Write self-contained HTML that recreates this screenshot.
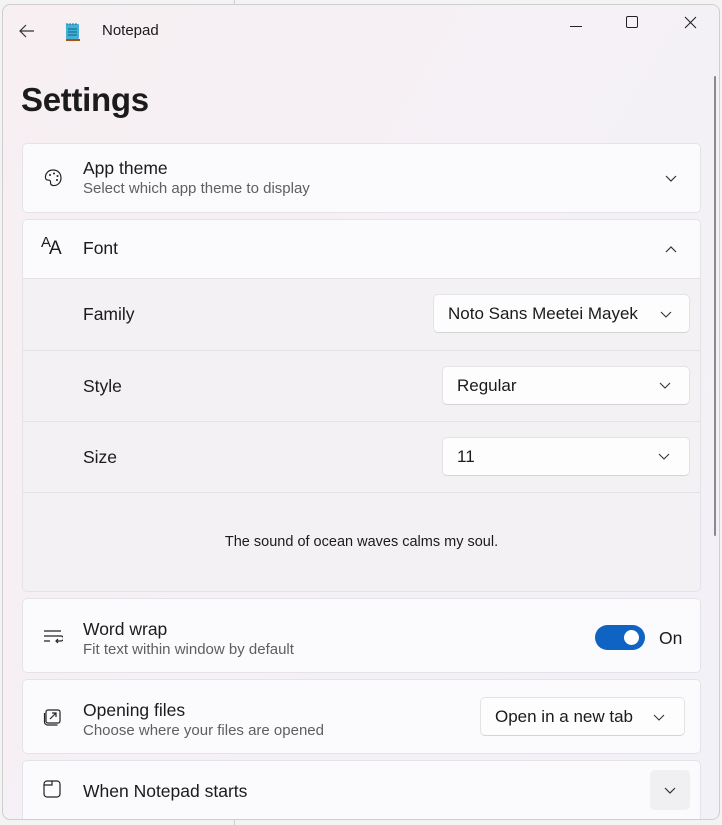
<!DOCTYPE html>
<html><head><style>
*{box-sizing:border-box;margin:0;padding:0}
body{width:722px;height:825px;background:#f3f3f3;position:relative;overflow:hidden;font-family:"Segoe UI","Liberation Sans",sans-serif;color:#1b1b1b}
.vl{position:absolute;left:234px;width:1px;background:#d0d0d0}
.win{position:absolute;left:2px;top:4px;width:718px;height:816px;border:1px solid #cfcfcf;border-radius:8px;background:linear-gradient(120deg,#f7eff2 0%,#f5f1f6 50%,#f2f1f7 100%);overflow:hidden}
.abs{position:absolute}
.card{position:absolute;left:19px;width:679px;background:#fbfafc;border:1px solid #e6e3e8;border-radius:5px}
.t{position:absolute;font-size:17.5px;color:#1b1b1b;white-space:nowrap}
.s{position:absolute;font-size:15px;color:#5f5f5f;white-space:nowrap}
.dd{position:absolute;background:#fdfdfe;border:1px solid #e3e2e6;border-bottom-color:#d4d3d8;border-radius:5px;font-size:17px;padding-left:14px;white-space:nowrap}
.row{position:absolute;left:0;width:677px;background:#f4f1f4;border-top:1px solid #e5e2e6}
</style></head><body>
<div class="vl" style="top:0;height:5px"></div>
<div class="vl" style="top:820px;height:5px"></div>
<div class="win">
  <svg class="abs" style="left:14px;top:17px" width="20" height="18" viewBox="0 0 20 18"><path d="M17 9H3M9 3L3 9l6 6" fill="none" stroke="#333" stroke-width="1.2"/></svg>
  <svg class="abs" style="left:62px;top:16px" width="16" height="22" viewBox="0 0 16 22"><rect x="1" y="3" width="13" height="15" rx="1" fill="#3fb2d8"/><path d="M3 8h9M3 11h9M3 14h9" stroke="#1a5c80" stroke-width="1"/><path d="M2 2v2M5 2v2M8 2v2M11 2v2" stroke="#26688a"/><rect x="1" y="18" width="14" height="2" fill="#b04d10"/></svg>
  <div class="t" style="left:99px;top:17px;font-size:15px">Notepad</div>
  <div class="abs" style="left:567px;top:21px;width:12px;height:1px;background:#222"></div>
  <div class="abs" style="left:623px;top:11px;width:12px;height:12px;border:1px solid #222;border-radius:2px"></div>
  <svg class="abs" style="left:681px;top:11px" width="13" height="13"><path d="M1 1l11 11M12 1L1 12" stroke="#222" stroke-width="1.1"/></svg>
  <div class="abs" style="left:711px;top:71px;width:2px;height:460px;background:#8a8a8a;border-radius:1px"></div>
  <div class="t" style="left:18px;top:76px;font-size:33px;font-weight:600;letter-spacing:-0.3px">Settings</div>

  <div class="card" style="top:138px;height:70px">
    <svg class="abs" style="left:20px;top:24px" width="20" height="20" viewBox="0 0 20 20"><path d="M10 2C5 2 2 6 2.5 10c.5 3 3 1.5 4.5 2.5S6 17 10 17.5c4.5.5 8-3 8-7.5S15 2 10 2z" fill="none" stroke="#222" stroke-width="1.2"/><circle cx="7" cy="7" r="1" fill="#222"/><circle cx="11" cy="5.5" r="1" fill="#222"/><circle cx="14.5" cy="8" r="1" fill="#222"/><circle cx="14" cy="12" r="1" fill="#222"/></svg>
    <div class="t" style="left:60px;top:14px">App theme</div>
    <div class="s" style="left:60px;top:36px">Select which app theme to display</div>
    <svg class="abs" style="left:642px;top:31px" width="12" height="8"><path d="M1 1l5 5 5-5" fill="none" stroke="#333" stroke-width="1.2"/></svg>
  </div>

  <div class="card" style="top:214px;height:373px;background:#f4f1f4;overflow:hidden">
    <div class="abs" style="left:0;top:0;width:677px;height:58px;background:#fbfafc"></div>
    <div class="t" style="left:18px;top:14px;font-size:15px">A</div><div class="t" style="left:26px;top:18px;font-size:19px;font-weight:300">A</div>
    <div class="t" style="left:60px;top:18px">Font</div>
    <svg class="abs" style="left:642px;top:25px" width="12" height="8"><path d="M1 7l5-5 5 5" fill="none" stroke="#333" stroke-width="1.2"/></svg>
    <div class="row" style="top:58px;height:72px"><div class="t" style="left:60px;top:25px">Family</div>
      <div class="dd" style="left:410px;top:15px;width:257px;height:39px;line-height:37px">Noto Sans Meetei Mayek</div>
      <svg class="abs" style="left:637px;top:32px" width="12" height="8"><path d="M1 1l5 5 5-5" fill="none" stroke="#333" stroke-width="1.1"/></svg></div>
    <div class="row" style="top:130px;height:71px"><div class="t" style="left:60px;top:25px">Style</div>
      <div class="dd" style="left:419px;top:15px;width:248px;height:39px;line-height:37px">Regular</div>
      <svg class="abs" style="left:636px;top:31px" width="12" height="8"><path d="M1 1l5 5 5-5" fill="none" stroke="#333" stroke-width="1.1"/></svg></div>
    <div class="row" style="top:201px;height:71px"><div class="t" style="left:60px;top:25px">Size</div>
      <div class="dd" style="left:419px;top:15px;width:248px;height:39px;line-height:37px">11</div>
      <svg class="abs" style="left:635px;top:31px" width="12" height="8"><path d="M1 1l5 5 5-5" fill="none" stroke="#333" stroke-width="1.1"/></svg></div>
    <div class="row" style="top:272px;height:99px;background:#f4f1f4"><div class="t" style="left:0;width:677px;text-align:center;top:41px;font-size:14.5px">The sound of ocean waves calms my soul.</div></div>
  </div>

  <div class="card" style="top:593px;height:75px">
    <svg class="abs" style="left:20px;top:30px" width="20" height="16" viewBox="0 0 20 16"><path d="M1 2h17M1 7h17a2.5 2.5 0 010 5h-5M1 12h6M15 10l-2 2 2 2" fill="none" stroke="#222" stroke-width="1.2"/></svg>
    <div class="t" style="left:60px;top:20px">Word wrap</div>
    <div class="s" style="left:60px;top:42px">Fit text within window by default</div>
    <div class="abs" style="left:572px;top:26px;width:50px;height:25px;border-radius:13px;background:#0f63c2"></div>
    <div class="abs" style="left:601px;top:31px;width:15px;height:15px;border-radius:50%;background:#fff"></div>
    <div class="t" style="left:636px;top:29px">On</div>
  </div>

  <div class="card" style="top:674px;height:75px">
    <svg class="abs" style="left:20px;top:27px" width="20" height="20" viewBox="0 0 20 20"><rect x="3" y="3" width="14" height="13" rx="2" fill="none" stroke="#222" stroke-width="1.2"/><path d="M1.5 6v9a3 3 0 003 3h10" fill="none" stroke="#222" stroke-width="1.2"/><path d="M7 12l6-6M9 6h4v4" fill="none" stroke="#222" stroke-width="1.2"/></svg>
    <div class="t" style="left:60px;top:20px">Opening files</div>
    <div class="s" style="left:60px;top:42px">Choose where your files are opened</div>
    <div class="dd" style="left:457px;top:17px;width:205px;height:39px;line-height:37px">Open in a new tab</div>
    <svg class="abs" style="left:630px;top:34px" width="12" height="8"><path d="M1 1l5 5 5-5" fill="none" stroke="#333" stroke-width="1.1"/></svg>
  </div>

  <div class="card" style="top:755px;height:70px">
    <svg class="abs" style="left:20px;top:19px" width="18" height="18" viewBox="0 0 18 18"><rect x="1" y="1" width="16" height="16" rx="3" fill="none" stroke="#222" stroke-width="1.2"/><path d="M1 5h8V1" fill="none" stroke="#222" stroke-width="1.2"/></svg>
    <div class="t" style="left:60px;top:20px">When Notepad starts</div>
    <div class="abs" style="left:627px;top:9px;width:40px;height:40px;border-radius:5px;background:#f0eff1"></div>
    <svg class="abs" style="left:641px;top:26px" width="12" height="8"><path d="M1 1l5 5 5-5" fill="none" stroke="#333" stroke-width="1.2"/></svg>
  </div>
</div>
</body></html>
